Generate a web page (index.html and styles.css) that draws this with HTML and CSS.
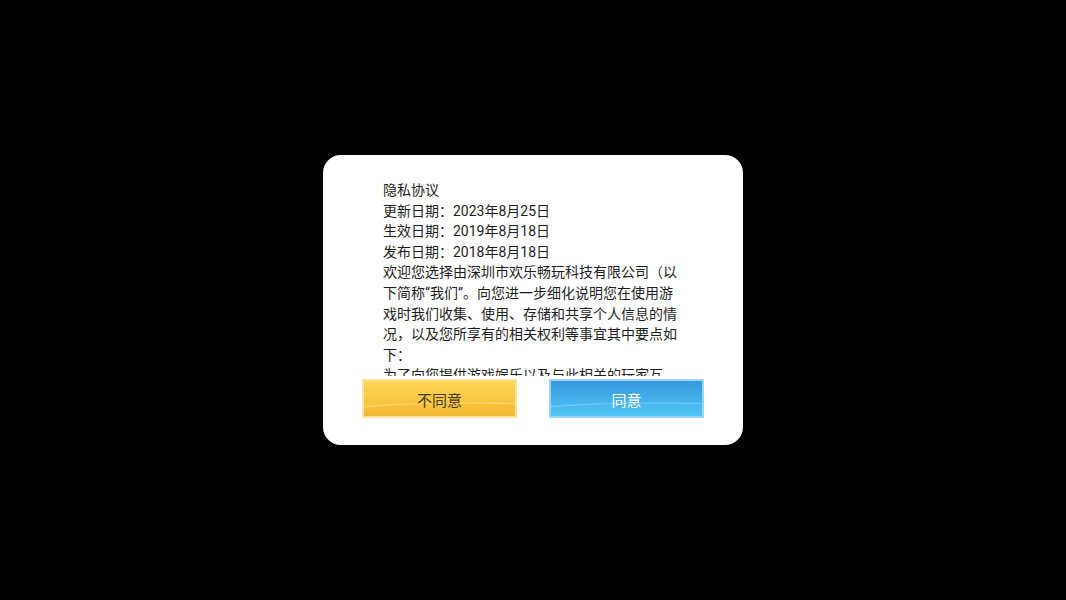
FILE: index.html
```html
<!DOCTYPE html>
<html lang="zh-CN">
<head>
<meta charset="utf-8">
<link rel="stylesheet" href="styles.css">
</head>
<body>
<div class="screen">
  <div class="dialog">
    <div class="content">
      <p>隐私协议</p>
      <p>更新日期：2023年8月25日</p>
      <p>生效日期：2019年8月18日</p>
      <p>发布日期：2018年8月18日</p>
      <p>欢迎您选择由深圳市欢乐畅玩科技有限公司（以下简称“我们”。向您进一步细化说明您在使用游戏时我们收集、使用、存储和共享个人信息的情况，以及您所享有的相关权利等事宜其中要点如下：</p>
      <p>为了向您提供游戏娱乐以及与此相关的玩家互动，我们会收集您的必要信息。</p>
    </div>
    <div class="actions">
      <button class="btn btn-no">不同意</button>
      <button class="btn btn-yes">同意</button>
    </div>
  </div>
</div>
</body>
</html>
```
FILE: styles.css
```css
html, body {
  margin: 0;
  padding: 0;
  background: #000;
}
.screen {
  width: 1066px;
  height: 600px;
  display: flex;
  align-items: center;
  justify-content: center;
}
.dialog {
  width: 420px;
  height: 290px;
  background: #fff;
  border-radius: 18px;
  box-sizing: border-box;
  padding: 25px 0 0 60px;
  display: flex;
  flex-direction: column;
}
.content {
  width: 297px;
  height: 196px;
  overflow: hidden;
  font-family: Roboto, "Noto Sans CJK SC", sans-serif;
  font-size: 14px;
  line-height: 20.6px;
  color: #1e1e1e;
}
.content p {
  margin: 0;
}
.actions {
  display: flex;
  gap: 32px;
  margin-left: -21px;
  margin-top: 3px;
}
.btn {
  width: 155px;
  height: 39px;
  box-sizing: border-box;
  font-family: Roboto, "Noto Sans CJK SC", sans-serif;
  font-size: 15px;
  padding: 1px 0 0;
  border-radius: 1px;
  cursor: pointer;
}
.btn-no {
  color: #4a3a1c;
  border: 2px solid #fbe39a;
  background:
    radial-gradient(ellipse 160% 60% at 70% 100%, rgba(255,255,255,0) 58%, rgba(255,240,190,0.4) 61%, rgba(255,255,255,0) 68%),
    linear-gradient(#fdd65a, #f8c73f 55%, #f3b834);
}
.btn-yes {
  color: #fff;
  border: 2px solid #9cd4f6;
  background:
    radial-gradient(ellipse 160% 60% at 70% 100%, rgba(255,255,255,0) 58%, rgba(200,235,255,0.35) 61%, rgba(255,255,255,0) 68%),
    linear-gradient(#3797dc, #44b2ec 55%, #52c6f7);
}
```
